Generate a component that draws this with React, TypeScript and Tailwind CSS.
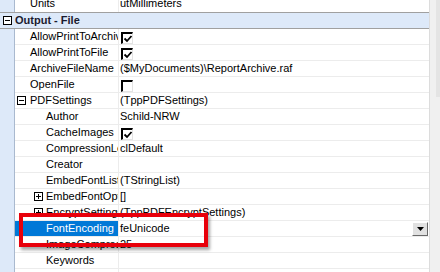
import React from "react";

type Row = {
  name: string;
  value?: string;
  level: 1 | 2;
  check?: boolean;
  box?: "plus" | "minus";
  selected?: boolean;
  combo?: boolean;
};

const rows: Row[] = [
  { name: "AllowPrintToArchive", level: 1, check: true },
  { name: "AllowPrintToFile", level: 1, check: true },
  { name: "ArchiveFileName", value: "($MyDocuments)\\ReportArchive.raf", level: 1 },
  { name: "OpenFile", level: 1, check: false },
  { name: "PDFSettings", value: "(TppPDFSettings)", level: 1, box: "minus" },
  { name: "Author", value: "Schild-NRW", level: 2 },
  { name: "CacheImages", level: 2, check: true },
  { name: "CompressionLevel", value: "clDefault", level: 2 },
  { name: "Creator", value: "", level: 2 },
  { name: "EmbedFontList", value: "(TStringList)", level: 2 },
  { name: "EmbedFontOptions", value: "[]", level: 2, box: "plus" },
  { name: "EncryptSettings", value: "(TppPDFEncryptSettings)", level: 2, box: "plus" },
  { name: "FontEncoding", value: "feUnicode", level: 2, selected: true, combo: true },
  { name: "ImageCompressionLevel", value: "25", level: 2 },
  { name: "Keywords", value: "", level: 2 },
  { name: "OpenPDFFile", level: 2, check: true },
];

function ExpandBox({ kind }: { kind: "plus" | "minus" }) {
  return (
    <span className="relative inline-block w-[9px] h-[9px] border border-black bg-white">
      <span className="absolute left-[1px] top-[3px] w-[5px] h-[1px] bg-black" />
      {kind === "plus" && <span className="absolute left-[3px] top-[1px] w-[1px] h-[5px] bg-black" />}
    </span>
  );
}

function CheckBox({ on }: { on: boolean }) {
  return (
    <span className="inline-block w-[12px] h-[12px] border-t-2 border-l-2 border-black border-r border-b border-r-[#e3e3e3] border-b-[#e3e3e3] bg-white">
      {on && (
        <svg width="10" height="10" viewBox="0 0 10 10" className="block">
          <path d="M1.5 4.5 L4 7 L8.5 2" fill="none" stroke="black" strokeWidth="1.8" />
        </svg>
      )}
    </span>
  );
}

function PropRow({ row }: { row: Row }) {
  const pad = row.level === 1 ? "pl-[15px]" : "pl-[31px]";
  const boxPos = row.level === 1 ? "left-[2px]" : "left-[19px]";
  return (
    <div className="flex h-[16px] shrink-0">
      <div className="w-[15px] shrink-0 bg-[#dde9f9] border-r border-[#a9b9cf]" />
      <div className="relative w-[104px] shrink-0 border-b border-r border-[#ececec] overflow-hidden">
        {row.box && (
          <span className={`absolute ${boxPos} top-[3px] leading-none`}>
            <ExpandBox kind={row.box} />
          </span>
        )}
        <div
          className={`h-full ${pad} leading-[15px] whitespace-nowrap ${
            row.selected ? "" : ""
          }`}
        >
          <span
            className={
              row.selected
                ? "absolute inset-y-0 left-0 right-0 bg-[#0078d7] text-white pl-[31px] leading-[15px]"
                : ""
            }
          >
            {row.name}
          </span>
        </div>
      </div>
      <div className="relative flex-1 border-b border-[#ececec] pl-[1px] leading-[15px] whitespace-nowrap">
        {row.check !== undefined ? (
          <span className="absolute left-[2px] top-[3px] leading-none">
            <CheckBox on={row.check} />
          </span>
        ) : (
          row.value
        )}
        {row.combo && (
          <span className="absolute right-[1px] top-[1px] w-[16px] h-[14px] bg-[#e1e1e1] border-t border-l border-white border-r border-b border-r-[#696969] border-b-[#696969] flex items-center justify-center">
            <svg width="7" height="4" viewBox="0 0 7 4">
              <path d="M0 0 H7 L3.5 4 Z" fill="black" />
            </svg>
          </span>
        )}
      </div>
    </div>
  );
}

export default function App() {
  return (
    <div
      className="relative w-[440px] h-[272px] overflow-hidden bg-white text-black text-[11px]"
      style={{ fontFamily: '"Liberation Sans", Arial, sans-serif' }}
    >
      <div className="flex h-full">
        <div className="flex-1 flex flex-col mt-[-4px]">
          {/* Units row, cut at the top */}
          <div className="flex h-[16px] shrink-0">
            <div className="w-[15px] shrink-0 bg-[#dde9f9] border-r border-[#a9b9cf]" />
            <div className="w-[104px] shrink-0 border-r border-[#ececec] pl-[15px] leading-[15px]">Units</div>
            <div className="flex-1 pl-[1px] leading-[15px]">utMillimeters</div>
          </div>

          {/* Category header */}
          <div className="relative flex h-[17px] shrink-0 items-center bg-[#dde9f9] border-t border-b border-[#a0a0a0]">
            <span className="absolute left-[3px] top-[3px] leading-none">
              <ExpandBox kind="minus" />
            </span>
            <span className="pl-[15px] font-bold text-[#1a1a2e]">Output - File</span>
          </div>

          {rows.map((r) => (
            <PropRow key={r.name} row={r} />
          ))}
        </div>

        {/* vertical scrollbar */}
        <div className="w-[11px] shrink-0 bg-[#f0f0f0] border-l border-[#dcdcdc] flex flex-col">
          <div className="ml-[6px] w-[4px] h-[97px] bg-[#e4e4e4]" />
        </div>
      </div>

      {/* red highlight */}
      <div className="absolute left-[19px] top-[213px] w-[189px] h-[34px] border-4 border-[#e8000b] shadow-[2px_3px_3px_rgba(0,0,0,0.35)]" />
    </div>
  );
}
